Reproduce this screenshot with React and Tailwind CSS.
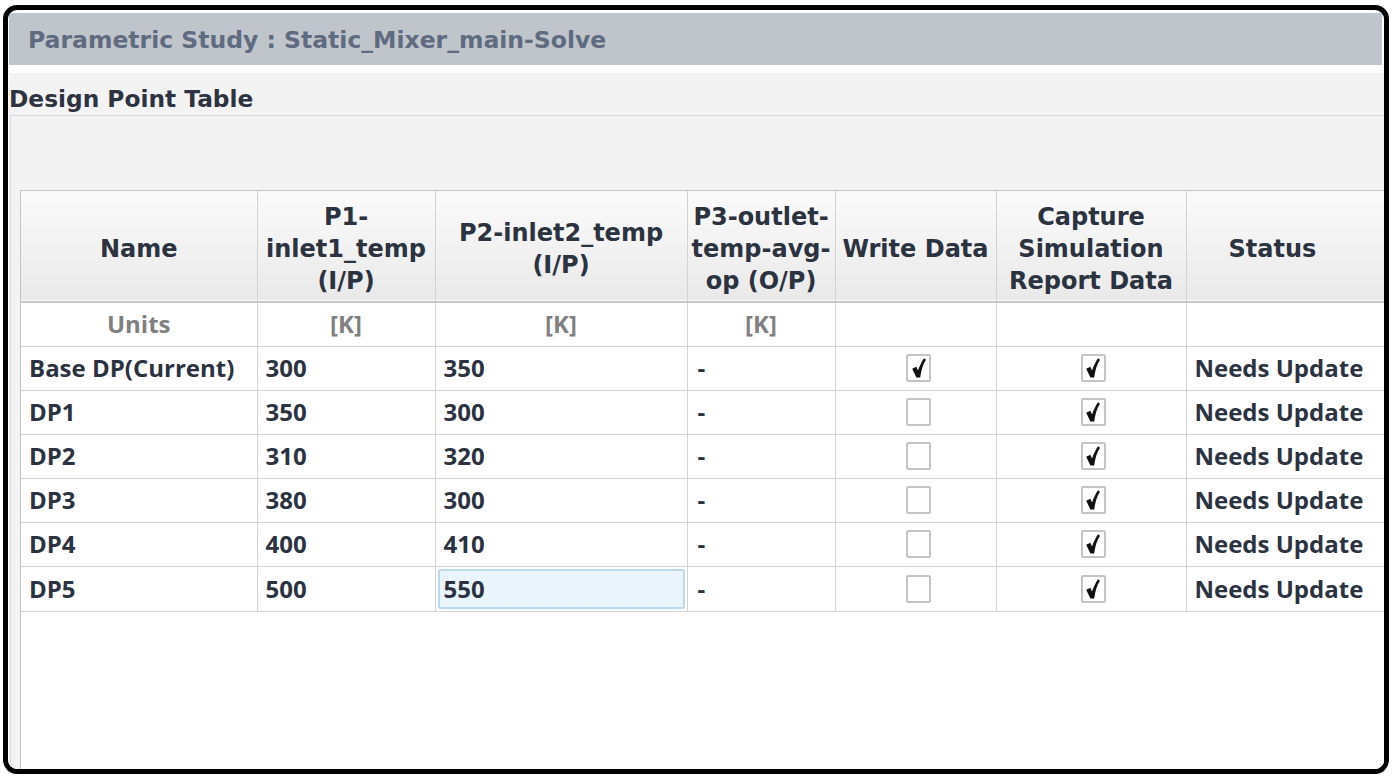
import React from 'react';

const rows = [
  { name: 'Base DP(Current)', p1: '300', p2: '350', write: true },
  { name: 'DP1', p1: '350', p2: '300', write: false },
  { name: 'DP2', p1: '310', p2: '320', write: false },
  { name: 'DP3', p1: '380', p2: '300', write: false },
  { name: 'DP4', p1: '400', p2: '410', write: false },
  { name: 'DP5', p1: '500', p2: '550', write: false, selected: true },
];

const verdana = { fontFamily: '"DejaVu Sans", Verdana, sans-serif' };

function CheckBox({ checked }) {
  return (
    <div className="mx-auto flex h-[28px] w-[25px] items-center justify-center rounded-[2px] border-2 border-[#c4c4c4] bg-white">
      {checked && (
        <svg width="14" height="20" viewBox="0 0 14 20">
          <path d="M0.2 10.8 L4.4 8.8 L6 12.6 C7.5 8.2 9.5 4 12 0.3 L14 1.8 C11 6.2 9.2 12 8.2 19.6 L4.4 19.6 Z" fill="#111" />
        </svg>
      )}
    </div>
  );
}

export default function App() {
  const th = 'border-r border-[#d2d2d2] px-1 text-center align-middle leading-[32px] pt-[6px] font-bold';
  const td = 'border-r border-b border-[#d4d4d4] h-[44px] align-middle';
  return (
    <div className="h-[778px] w-[1392px] overflow-hidden bg-white pl-[3px] pt-[5px]" style={{ fontFamily: '"Open Sans", "Noto Sans", sans-serif' }}>
      <div className="flex h-[769px] w-[1386px] flex-col overflow-hidden rounded-[14px] border-[5px] border-black bg-white pt-[3px]">
        <div className="ml-[1px] mr-[2px] flex h-[52px] shrink-0 items-center bg-[#c0c4cb] pl-[19px] pt-[3px] text-[23.5px] font-bold text-[#5f6b80]" style={verdana}>
          Parametric Study : Static_Mixer_main-Solve
        </div>
        <div className="h-[8px] shrink-0" />
        <div className="ml-[1px] flex min-h-0 flex-1 flex-col bg-[#f3f3f3]">
          <div className="flex h-[42px] shrink-0 items-end text-[23.3px] font-bold leading-[32px] text-[#2d3340]" style={verdana}>
            Design Point Table
          </div>
          <div className="ml-[1px] flex min-h-0 flex-1 flex-col border-l border-t border-[#d3d9e5] pl-[9px] pt-[74px]">
            <div className="min-h-0 flex-1 overflow-hidden border-l border-t border-[#c4c4c4] bg-white">
              <table className="w-[1420px] table-fixed border-collapse text-[24px] font-bold text-[#2b3240]">
                <colgroup>
                  <col className="w-[236px]" />
                  <col className="w-[178px]" />
                  <col className="w-[252px]" />
                  <col className="w-[148px]" />
                  <col className="w-[161px]" />
                  <col className="w-[190px]" />
                  <col />
                </colgroup>
                <thead className="text-[24px]" style={verdana}>
                  <tr className="h-[111px] border-b-2 border-[#c8c8c8] bg-gradient-to-b from-[#fbfbfb] to-[#e9e9e9]">
                    <th className={th}>Name</th>
                    <th className={th}>P1-<br />inlet1_temp<br />(I/P)</th>
                    <th className={th}>P2-inlet2_temp<br />(I/P)</th>
                    <th className={th}>P3-outlet-<br />temp-avg-<br />op (O/P)</th>
                    <th className={th + ' whitespace-nowrap'}>Write Data</th>
                    <th className={th}>Capture<br />Simulation<br />Report Data</th>
                    <th className={th + ' text-left pl-[42px]'}>Status</th>
                  </tr>
                </thead>
                <tbody>
                  <tr>
                    <td className={td + ' text-center text-[#808080]'}>Units</td>
                    <td className={td + ' text-center text-[#808080]'}>[K]</td>
                    <td className={td + ' text-center text-[#808080]'}>[K]</td>
                    <td className={td + ' text-center text-[#808080]'}>[K]</td>
                    <td className={td} />
                    <td className={td} />
                    <td className={td} />
                  </tr>
                  {rows.map((r) => (
                    <tr key={r.name}>
                      <td className={td + ' pl-[8px]'}>{r.name}</td>
                      <td className={td + ' pl-[8px]'}>{r.p1}</td>
                      <td className={td + ' p-[2px]'}>
                        {r.selected ? (
                          <div className="flex h-[40px] items-center rounded-[2px] border-2 border-[#b9d9f4] bg-[#eaf4fd] pl-[4px]">{r.p2}</div>
                        ) : (
                          <div className="pl-[6px]">{r.p2}</div>
                        )}
                      </td>
                      <td className={td + ' pl-[10px]'}>-</td>
                      <td className={td + ' pl-[6px]'}><CheckBox checked={r.write} /></td>
                      <td className={td + ' pl-[4px]'}><CheckBox checked /></td>
                      <td className={td + ' pl-[8px] whitespace-nowrap'}>Needs Update</td>
                    </tr>
                  ))}
                </tbody>
              </table>
            </div>
          </div>
        </div>
      </div>
    </div>
  );
}
